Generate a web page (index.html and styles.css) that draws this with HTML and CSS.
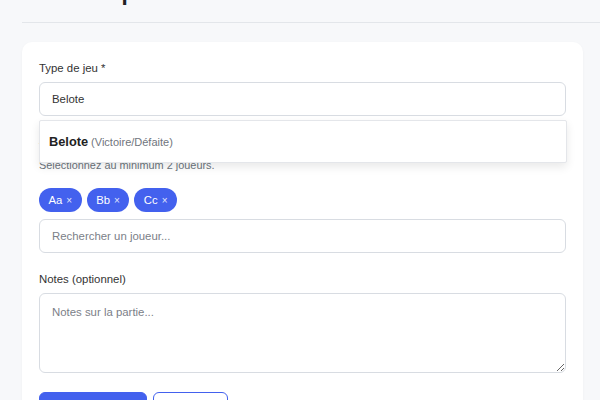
FILE: index.html
```html
<!DOCTYPE html>
<html lang="fr">
<head>
<meta charset="utf-8">
<title>Nouvelle partie</title>
<link rel="stylesheet" href="styles.css">
</head>
<body>
<div class="page">
  <header class="page-header">
    <h1 class="title">Nouvelle partie</h1>
  </header>
  <form class="card">
    <div class="group">
      <label class="label">Type de jeu *</label>
      <div class="field-wrap">
        <input class="input" type="text" value="Belote">
        <div class="dropdown">
          <div class="option"><span class="opt-name">Belote</span><span class="opt-meta">(Victoire/Défaite)</span></div>
        </div>
      </div>
    </div>
    <div class="group">
      <label class="label">Joueurs *</label>
      <p class="help">Sélectionnez au minimum 2 joueurs.</p>
      <div class="chips">
        <span class="chip">Aa <span class="chip-x">×</span></span>
        <span class="chip">Bb <span class="chip-x">×</span></span>
        <span class="chip">Cc <span class="chip-x">×</span></span>
      </div>
      <input class="input" type="text" placeholder="Rechercher un joueur...">
    </div>
    <div class="group">
      <label class="label">Notes (optionnel)</label>
      <textarea class="textarea" placeholder="Notes sur la partie..."></textarea>
    </div>
    <div class="actions">
      <button type="button" class="btn btn-primary">Enregistrer</button>
      <button type="button" class="btn btn-secondary">Annuler</button>
    </div>
  </form>
</div>
</body>
</html>
```

FILE: styles.css
```css
* { box-sizing: border-box; }
html, body { margin: 0; padding: 0; }
body {
  background: #f7f8fa;
  font-family: "Liberation Sans", Arial, sans-serif;
  color: #333;
  overflow: hidden;
}
.page {
  padding-left: 22px;
}
.page-header {
  margin-top: -21px;
  padding-bottom: 15px;
  border-bottom: 1px solid #e3e6ea;
}
.title {
  margin: 0;
  font-size: 22.4px;
  line-height: 28px;
  font-weight: 700;
  color: #222;
}
.card {
  margin-top: 19px;
  width: 561px;
  background: #fff;
  border-radius: 10px;
  padding: 17px;
  box-shadow: 0 1px 3px rgba(0,0,0,0.04);
}
.group {
  margin-bottom: 16px;
}
.group:nth-child(2) { margin-bottom: 17px; }
.label {
  display: block;
  font-size: 11.4px;
  line-height: 18px;
  color: #333;
  margin-bottom: 5px;
}
.field-wrap {
  position: relative;
}
.input {
  display: block;
  width: 100%;
  height: 34px;
  padding: 0 12px;
  border: 1px solid #d8dce2;
  border-radius: 6px;
  font-family: inherit;
  font-size: 11.4px;
  color: #333;
  background: #fff;
  outline: none;
}
.input::placeholder, .textarea::placeholder { color: #7b8088; }
.dropdown {
  position: absolute;
  top: calc(100% + 4px);
  left: 0;
  right: -1px;
  background: #fff;
  border: 1px solid #e4e6ea;
  border-radius: 2px;
  box-shadow: 0 4px 10px rgba(0,0,0,0.09);
  z-index: 5;
}
.option {
  padding: 10px 9px;
  line-height: 19px;
}
.opt-name {
  font-weight: 700;
  font-size: 12.8px;
  color: #222;
}
.opt-meta {
  font-size: 11px;
  color: #70757d;
  margin-left: 3px;
}
.help {
  margin: 7px 0 15px;
  font-size: 10.9px;
  line-height: 16px;
  color: #6c757d;
}
.chips {
  display: flex;
  gap: 5px;
  margin-bottom: 7px;
}
.chip {
  display: inline-flex;
  align-items: center;
  height: 24px;
  padding: 0 9.5px;
  border-radius: 12px;
  background: #4361ee;
  color: #fff;
  font-size: 11.3px;
}
.chip-x {
  margin-left: 4px;
  font-size: 10px;
  opacity: 0.85;
}
.textarea {
  display: block;
  width: 100%;
  height: 80px;
  padding: 9px 12px;
  border: 1px solid #d8dce2;
  border-radius: 6px;
  font-family: inherit;
  font-size: 11.4px;
  line-height: 18px;
  color: #333;
  resize: vertical;
  outline: none;
}
.actions {
  margin-top: 19px;
  display: flex;
  gap: 6px;
}
.btn {
  height: 36px;
  border-radius: 6px;
  font-family: inherit;
  font-size: 11.3px;
  font-weight: 600;
}
.btn-primary {
  width: 108px;
  background: #4361ee;
  color: #fff;
  border: 1.5px solid #4361ee;
}
.btn-secondary {
  width: 75px;
  background: #fff;
  color: #4361ee;
  border: 1.5px solid #4361ee;
}
```
